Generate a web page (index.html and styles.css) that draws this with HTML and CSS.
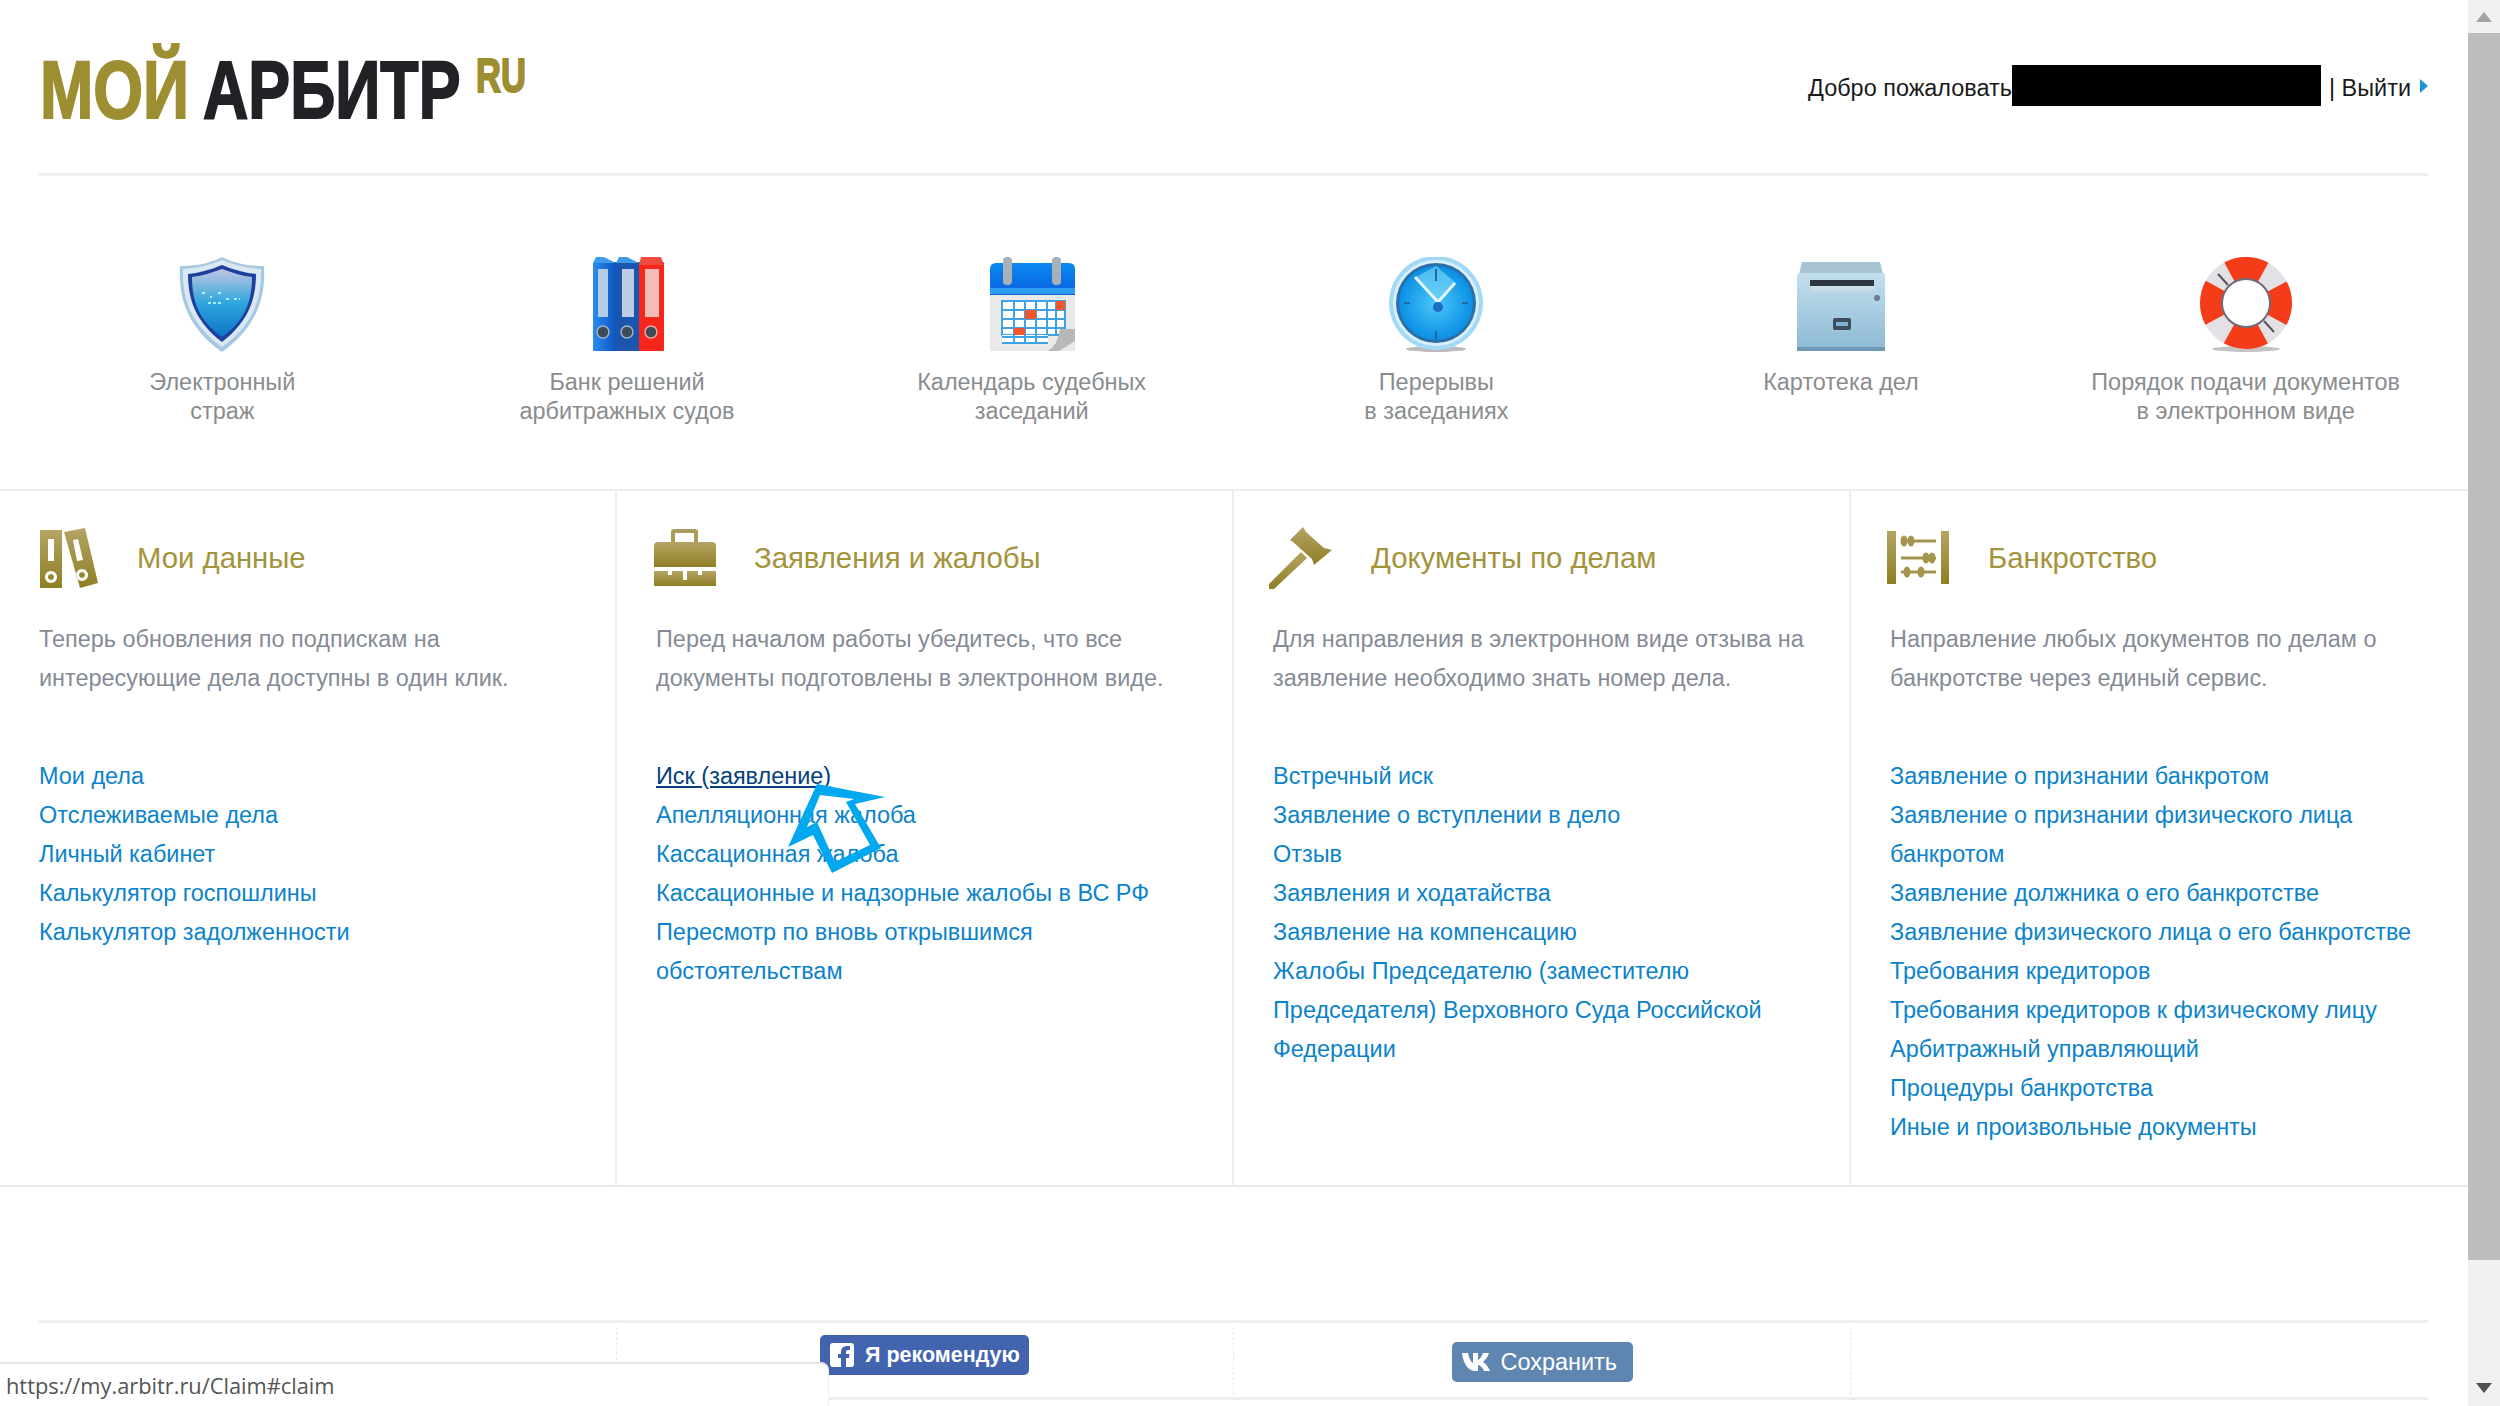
FILE: index.html
```html
<!DOCTYPE html>
<html lang="ru">
<head>
<meta charset="UTF-8" />
<title>Мой Арбитр</title>
<link rel="stylesheet" href="styles.css">
</head>
<body>
<svg class="defs" width="0" height="0">
  <defs>
    <linearGradient id="gold" x1="0" y1="0" x2="0" y2="1"><stop offset="0" stop-color="#b3a465"/><stop offset="1" stop-color="#8f7f24"/></linearGradient>
    <linearGradient id="sh" x1="0" y1="0" x2="0" y2="1"><stop offset="0" stop-color="#c3c6e2"/><stop offset=".5" stop-color="#2fa6dc"/><stop offset="1" stop-color="#0c74c8"/></linearGradient>
    <linearGradient id="blue" x1="0" y1="0" x2="1" y2="0"><stop offset="0" stop-color="#2a8cf0"/><stop offset="1" stop-color="#0d52c0"/></linearGradient>
    <linearGradient id="top" x1="0" y1="0" x2="0" y2="1"><stop offset="0" stop-color="#0a8af0"/><stop offset="1" stop-color="#0a5fe0"/></linearGradient>
    <linearGradient id="steel" x1="0" y1="0" x2="0" y2="1"><stop offset="0" stop-color="#c3dfee"/><stop offset="1" stop-color="#8cbad4"/></linearGradient>
    <linearGradient id="slot" x1="0" y1="0" x2="0" y2="1"><stop offset="0" stop-color="#e6edf2"/><stop offset="1" stop-color="#b4d2e4"/></linearGradient>
    <radialGradient id="face"><stop offset="0" stop-color="#4cc8fa"/><stop offset="1" stop-color="#0a8fe4"/></radialGradient>
  </defs>
</svg>
<div class="window">
  <div class="page">
    <header class="top">
      <div class="logo">
        <span class="logo-moi">МОЙ</span><span class="logo-arbitr">АРБИТР</span><span class="logo-ru">RU</span>
      </div>
      <div class="welcome">
        <span class="welcome-text">Добро пожаловать</span><span class="redacted"></span><span class="welcome-text">| Выйти</span>
        <svg class="logout-arrow" width="8" height="14" viewBox="0 0 8 14"><path d="M0 0l8 7-8 7z" fill="#1d93d6"/></svg>
      </div>
    </header>

    <nav class="quick">
      <a class="quick-item">
        <svg width="96" height="96" viewBox="0 0 96 96">
          <path d="M48 0C62 7 75 9 90 9c2 32-8 62-42 86C14 71 4 41 6 9 21 9 34 7 48 0z" fill="#a6c8e0"/>
          <path d="M48 3C62 9 75 11 87 12c1 30-8 56-39 78C17 68 8 42 9 12 21 11 34 9 48 3z" fill="#d9e8f2"/>
          <path d="M48 8c12 5 24 8 34 9 0 26-8 48-34 68C22 65 14 43 14 17c10-1 22-4 34-9z" fill="#1d3f9e"/>
          <path d="M48 12c11 4 21 7 30 8 0 24-7 44-30 60C25 64 18 44 18 20c9-1 19-4 30-8z" fill="url(#sh)"/>
          <path d="M28 36h4M36 40h2M44 36h4M52 42h4M60 42h6M34 46h14" stroke="#a8f0ff" stroke-width="2" stroke-dasharray="3 2"/>
        </svg>
        <span>Электронный<br>страж</span>
      </a>
      <a class="quick-item">
        <svg width="96" height="96" viewBox="0 0 96 96">
          <rect x="14" y="5" width="24" height="89" rx="1" fill="url(#blue)"/>
          <rect x="37" y="5" width="24" height="89" rx="1" fill="#1a56b0"/>
          <rect x="60" y="5" width="25" height="89" rx="1" fill="#f6261a"/>
          <path d="M17 0h8l12 6H14zM40 0h8l12 6H37z" fill="#3f9be8"/>
          <path d="M62 0h20l3 8H60z" fill="#ee4a40"/>
          <rect x="19" y="12" width="10" height="48" fill="#b5cae4"/><rect x="43" y="12" width="12" height="48" fill="#bccde4"/><rect x="66" y="12" width="14" height="48" fill="#f4bcb6"/>
          <circle cx="24" cy="75" r="6" fill="#3d4c58" stroke="#9fb4c6" stroke-width="1.5"/><circle cx="48" cy="75" r="6" fill="#3d4c58" stroke="#9fb4c6" stroke-width="1.5"/><circle cx="72" cy="75" r="6" fill="#3d4c58" stroke="#e8a8a0" stroke-width="1.5"/>
        </svg>
        <span>Банк решений<br>арбитражных судов</span>
      </a>
      <a class="quick-item">
        <svg width="96" height="96" viewBox="0 0 96 96">
          <rect x="6" y="36" width="85" height="58" fill="#e9e9e9"/>
          <path d="M6 12q0-6 6-6h73q6 0 6 6v26H6z" fill="url(#top)"/>
          <rect x="6" y="31" width="85" height="6" fill="#2d9cf4"/>
          <rect x="19" y="0" width="9" height="28" rx="4" fill="#a8b0b8"/><rect x="68" y="0" width="9" height="28" rx="4" fill="#a8b0b8"/>
          <path d="M18 44h63v34H18z" fill="#fff" stroke="#3fa2e4" stroke-width="2"/>
          <path d="M30 44v42M41 44v42M52 44v42M63 44v34M72 44v34M18 53h63M18 62h63M18 71h63" stroke="#3fa2e4" stroke-width="2" fill="none"/>
          <rect x="41" y="53" width="11" height="9" fill="#f4552a"/><rect x="72" y="44" width="9" height="9" fill="#f4552a"/><rect x="30" y="71" width="11" height="9" fill="#f4552a"/>
          <path d="M18 78v8h46V78z" fill="#fff"/>
          <path d="M18 80h46M30 78v8M41 78v8M52 78v8M18 86h46" stroke="#3fa2e4" stroke-width="2"/>
          <path d="M91 72v12L75 94H64q10-6 12-22z" fill="#b8b8b8"/>
        </svg>
        <span>Календарь судебных<br>заседаний</span>
      </a>
      <a class="quick-item">
        <svg width="96" height="96" viewBox="0 0 96 96">
          <ellipse cx="48" cy="92" rx="30" ry="3" fill="#bbb"/>
          <circle cx="48" cy="46" r="47" fill="#a3d9f7"/>
          <circle cx="48" cy="46" r="43" fill="#d8f0fb"/>
          <circle cx="48" cy="46" r="40" fill="#2c6fa8"/>
          <circle cx="48" cy="46" r="37" fill="url(#face)"/>
          <path d="M48 9L28 20l21 26 19-20z" fill="#7dd8fa" opacity=".6"/>
          <path d="M50 45L27 20M50 45l17-19" stroke="#e6f7ff" stroke-width="3"/>
          <circle cx="50" cy="50" r="5" fill="#1c6cc0"/>
          <path d="M48 12v12M48 74v8M16 46h6M74 46h6" stroke="#20699f" stroke-width="2"/>
        </svg>
        <span>Перерывы<br>в заседаниях</span>
      </a>
      <a class="quick-item">
        <svg width="96" height="96" viewBox="0 0 96 96">
          <path d="M9 5h78l4 16H5z" fill="#a8c4d4"/>
          <rect x="4" y="16" width="88" height="78" rx="2" fill="url(#steel)"/>
          <path d="M17 23h64v14H17z" fill="url(#slot)"/>
          <path d="M17 23h64v6H17z" fill="#2c3740"/>
          <rect x="40" y="61" width="18" height="12" rx="2" fill="#3d4d5a"/>
          <rect x="43" y="65" width="12" height="4" fill="#7db3d6"/>
          <circle cx="84" cy="41" r="3" fill="#6a7f8c"/>
          <rect x="4" y="90" width="88" height="4" fill="#6d9ab6"/>
        </svg>
        <span>Картотека дел</span>
      </a>
      <a class="quick-item">
        <svg width="96" height="96" viewBox="0 0 96 96">
          <ellipse cx="48" cy="92" rx="34" ry="3" fill="#c4c4c4"/>
          <circle cx="48" cy="46" r="35" fill="none" stroke="#e3e1e6" stroke-width="22"/>
          <circle cx="48" cy="46" r="35" fill="none" stroke="#f53c18" stroke-width="22" stroke-dasharray="35 20" stroke-dashoffset="17.5"/>
          <circle cx="48" cy="46" r="24" fill="none" stroke="#6f6a7a" stroke-width="2"/>
          <path d="M20 17l10 11M76 75L66 64" stroke="#555" stroke-width="2"/>
        </svg>
        <span>Порядок подачи документов<br>в электронном виде</span>
      </a>
    </nav>

    <main class="sections">
      <section class="section">
        <h2 class="section-title">
          <svg width="60" height="60" viewBox="0 0 60 60">
            <path fill-rule="evenodd" fill="url(#gold)" d="M1 2h22v58H1zM9 11v22h6V11zM12 43a6 6 0 1 0 .01 0zM12 46a3 3 0 1 1-.01 0z"/>
            <path fill-rule="evenodd" fill="url(#gold)" d="M25 4L46 0l13 55-18 5zM34 12l4 21 6-1-5-21zM43 41a6 6 0 1 0 .01 0zM43 44a3 3 0 1 1-.01 0z"/>
          </svg>
          Мои данные
        </h2>
        <p class="section-desc">Теперь обновления по подпискам на интересующие дела доступны в один клик.</p>
        <ul class="links">
          <li><a>Мои дела</a></li>
          <li><a>Отслеживаемые дела</a></li>
          <li><a>Личный кабинет</a></li>
          <li><a>Калькулятор госпошлины</a></li>
          <li><a>Калькулятор задолженности</a></li>
        </ul>
      </section>
      <section class="section">
        <h2 class="section-title">
          <svg class="icon-case" width="62" height="60" viewBox="0 0 62 60">
            <path fill="none" stroke="#ab9c5c" stroke-width="4" d="M19 14V4q0-1 1-1h21q1 0 1 1v10"/>
            <path fill="url(#gold)" d="M0 18q0-4 4-4h54q4 0 4 4v21H0z"/>
            <path fill="url(#gold)" d="M0 43h14v4h4v-4h11v9h4v-9h11v4h4v-4h14v15H0z"/>
          </svg>
          Заявления и жалобы
        </h2>
        <p class="section-desc">Перед началом работы убедитесь, что все документы подготовлены в электронном виде.</p>
        <ul class="links">
          <li><a class="hover">Иск (заявление)</a></li>
          <li><a>Апелляционная жалоба</a></li>
          <li><a>Кассационная жалоба</a></li>
          <li><a>Кассационные и надзорные жалобы в ВС РФ</a></li>
          <li><a>Пересмотр по вновь открывшимся обстоятельствам</a></li>
        </ul>
        <svg class="pointer" width="110" height="98" viewBox="0 0 110 98">
          <path fill="#00a8f0" fill-rule="evenodd" d="M37 4l68 13-30 7 26 44-49 25-19-38-25 12zM40 15L27 47l10-5 18 40 35-17-24-43 8-3z"/>
        </svg>
      </section>
      <section class="section">
        <h2 class="section-title">
          <svg class="icon-wide" width="64" height="62" viewBox="0 0 64 62">
            <path fill="url(#gold)" d="M34 0l3 5 18 16 8 2-18 15-2-6-19-17-3-2z"/>
            <path fill="url(#gold)" d="M32 25l6 6L5 62H0v-5z"/>
          </svg>
          Документы по делам
        </h2>
        <p class="section-desc">Для направления в электронном виде отзыва на заявление необходимо знать номер дела.</p>
        <ul class="links">
          <li><a>Встречный иск</a></li>
          <li><a>Заявление о вступлении в дело</a></li>
          <li><a>Отзыв</a></li>
          <li><a>Заявления и ходатайства</a></li>
          <li><a>Заявление на компенсацию</a></li>
          <li><a>Жалобы Председателю (заместителю Председателя) Верховного Суда Российской Федерации</a></li>
        </ul>
      </section>
      <section class="section">
        <h2 class="section-title">
          <svg class="icon-wide" width="64" height="60" viewBox="0 0 64 60">
            <rect x="1" y="3" width="9" height="53" fill="url(#gold)"/>
            <rect x="55" y="3" width="8" height="53" fill="url(#gold)"/>
            <path d="M15 13h35M15 30h35M15 44h35" stroke="#a4954e" stroke-width="3"/>
            <g fill="#a4954e">
              <ellipse cx="18" cy="13" rx="3.5" ry="5.5"/><ellipse cx="25" cy="13" rx="3.5" ry="5.5"/>
              <ellipse cx="40" cy="30" rx="3.5" ry="5.5"/><ellipse cx="46" cy="30" rx="3.5" ry="5.5"/>
              <ellipse cx="21" cy="44" rx="3.5" ry="5.5"/><ellipse cx="35" cy="44" rx="3.5" ry="5.5"/>
            </g>
          </svg>
          Банкротство
        </h2>
        <p class="section-desc">Направление любых документов по делам о банкротстве через единый сервис.</p>
        <ul class="links">
          <li><a>Заявление о признании банкротом</a></li>
          <li><a>Заявление о признании физического лица банкротом</a></li>
          <li><a>Заявление должника о его банкротстве</a></li>
          <li><a>Заявление физического лица о его банкротстве</a></li>
          <li><a>Требования кредиторов</a></li>
          <li><a>Требования кредиторов к физическому лицу</a></li>
          <li><a>Арбитражный управляющий</a></li>
          <li><a>Процедуры банкротства</a></li>
          <li><a>Иные и произвольные документы</a></li>
        </ul>
      </section>
    </main>

    <footer class="footer">
      <div class="footer-cell"></div>
      <div class="footer-cell">
        <a class="btn-fb">
          <svg width="24" height="24" viewBox="0 0 24 24"><path fill="#fff" fill-rule="evenodd" d="M3 0h18q3 0 3 3v18q0 3-3 3h-5v-9h3l.5-4H16V9q0-2 2-2h2V3h-3q-6 0-6 6v2H8v4h3v9H3q-3 0-3-3V3q0-3 3-3z"/></svg>
          Я рекомендую
        </a>
      </div>
      <div class="footer-cell">
        <a class="btn-vk">
          <svg width="30" height="20" viewBox="0 0 30 20"><path fill="#fff" d="M0 1h6c1 5 3 9 5 10V1h5v7c2-1 4-4 5-7h6c-1 4-4 7-6 9 2 1 5 4 7 9h-6c-1-3-4-6-6-6v6h-3C6 19 1 11 0 1z"/></svg>
          Сохранить
        </a>
      </div>
      <div class="footer-cell"></div>
    </footer>
  </div>

  <div class="scrollbar">
    <button class="scroll-btn"><svg width="16" height="10" viewBox="0 0 16 10"><path d="M8 0l8 10H0z" fill="#a3a3a3"/></svg></button>
    <div class="scroll-track"><div class="scroll-thumb"></div></div>
    <button class="scroll-btn scroll-btn-down"><svg width="16" height="10" viewBox="0 0 16 10"><path d="M0 0h16L8 10z" fill="#505050"/></svg></button>
  </div>

  <div class="status-url">https://my.arbitr.ru/Claim#claim</div>
</div>
</body>
</html>
```

FILE: styles.css
```css
html, body {
  margin: 0;
  padding: 0;
  height: 1406px;
  overflow: hidden;
  background: #fff;
}
body {
  font-family: "Liberation Sans", Arial, sans-serif;
  font-size: 23.44px;
  color: #222;
}
.defs {
  display: block;
  height: 0;
}
a {
  text-decoration: none;
  color: inherit;
}
.window {
  display: flex;
  height: 1406px;
  position: relative;
  overflow: hidden;
}
.page {
  flex: 1;
  min-width: 0;
  display: flex;
  flex-direction: column;
}

/* header */
.top {
  height: 173px;
  margin: 0 40px 0 39px;
  border-bottom: 3px solid #eee;
  display: flex;
  justify-content: space-between;
  align-items: flex-start;
  flex: none;
}
.logo {
  display: flex;
  align-items: flex-start;
  margin: 49px 0 0 1px;
  font-weight: bold;
  white-space: nowrap;
}
.logo span {
  display: block;
  transform-origin: left top;
  font-size: 82px;
  line-height: 82px;
  -webkit-text-stroke: 2px currentColor;
}
.logo-moi {
  width: 163px;
  color: #9d8e32;
  transform: scaleX(.78);
}
.logo-arbitr {
  width: 273px;
  color: #212226;
  transform: scaleX(.765);
}
.logo .logo-ru {
  margin-top: 3px;
  width: 50px;
  color: #9d8e32;
  font-size: 48px;
  line-height: 48px;
  transform: scaleX(.72);
}
.welcome {
  display: flex;
  align-items: center;
  margin-top: 65px;
  height: 41px;
  color: #1a1a1a;
}
.welcome-text {
  padding-top: 5px;
}
.redacted {
  width: 309px;
  height: 41px;
  background: #000;
  margin-right: 8px;
}
.logout-arrow {
  margin-left: 9px;
}

/* quick links */
.quick {
  display: grid;
  grid-template-columns: repeat(6, 1fr);
  margin: 0 20px;
  padding-top: 81px;
  flex: none;
  box-sizing: border-box;
  height: 313px;
}
.quick-item {
  display: flex;
  flex-direction: column;
  align-items: center;
  text-align: center;
  color: #8a8c8e;
  line-height: 29px;
}
.quick-item span {
  margin-top: 15px;
}

/* four columns */
.sections {
  display: grid;
  grid-template-columns: repeat(4, 617px);
  height: 698px;
  flex: none;
  box-sizing: border-box;
  border-top: 2px solid #eee;
  border-bottom: 2px solid #e8e8e8;
}
.section {
  position: relative;
  padding: 0 20px 0 39px;
  border-right: 2px solid #eee;
}
.section:last-child {
  border-right: none;
}
.section-title {
  display: flex;
  align-items: center;
  gap: 38px;
  margin: 37px 0 0;
  height: 60px;
  font-size: 29.3px;
  font-weight: normal;
  color: #a3933a;
}
.icon-case {
  margin-left: -2px;
}
.icon-wide {
  margin-left: -4px;
}
.section-desc {
  margin: 32px 0 0;
  line-height: 39px;
  color: #858b96;
}
.links {
  list-style: none;
  margin: 59px 0 0;
  padding: 0;
  line-height: 39.05px;
  color: #0b83cb;
}
.links a.hover {
  color: #03407c;
  text-decoration: underline;
}
.pointer {
  position: absolute;
  left: 163px;
  top: 289px;
}

/* footer strip */
.footer {
  display: grid;
  grid-template-columns: repeat(4, 617px);
  margin: 133px 0 0;
  position: relative;
  height: 80px;
  flex: none;
  box-sizing: border-box;
}
.footer::before,
.footer::after {
  content: "";
  position: absolute;
  left: 39px;
  right: 40px;
  height: 3px;
  background: #eee;
}
.footer::before {
  top: 0;
}
.footer::after {
  bottom: 0;
}
.footer-cell {
  margin-top: 7px;
  border-right: 1px dashed #eaeaea;
  display: flex;
  justify-content: center;
}
.footer-cell:last-child {
  border-right: none;
}
.btn-fb,
.btn-vk {
  display: flex;
  align-items: center;
  color: #fff;
  border-radius: 5px;
  box-sizing: border-box;
}
.btn-fb {
  width: 209px;
  height: 40px;
  margin: 8px 0 0 -1px;
  padding-left: 10px;
  gap: 11px;
  background: #4264af;
  font-size: 21.5px;
  font-weight: bold;
}
.btn-vk {
  width: 181px;
  height: 40px;
  margin-top: 15px;
  padding-left: 10px;
  gap: 9px;
  background: #5f86b0;
}

/* browser chrome */
.scrollbar {
  width: 32px;
  flex: none;
  display: flex;
  flex-direction: column;
  background: #f1f1f1;
}
.scroll-btn {
  height: 33px;
  border: none;
  padding: 0;
  background: #f1f1f1;
  display: flex;
  align-items: center;
  justify-content: center;
}
.scroll-btn-down {
  height: 36px;
}
.scroll-track {
  flex: 1;
}
.scroll-thumb {
  height: 1227px;
  background: #bdbdbd;
}
.status-url {
  position: absolute;
  left: 0;
  bottom: 0;
  width: 829px;
  height: 44px;
  box-sizing: border-box;
  padding-left: 6px;
  background: #fff;
  border-top: 2px solid #e4e4e4;
  border-right: 1px solid #eee;
  border-top-right-radius: 8px;
  font-family: "Open Sans", sans-serif;
  font-size: 21.8px;
  line-height: 43px;
  color: #555;
}
```
